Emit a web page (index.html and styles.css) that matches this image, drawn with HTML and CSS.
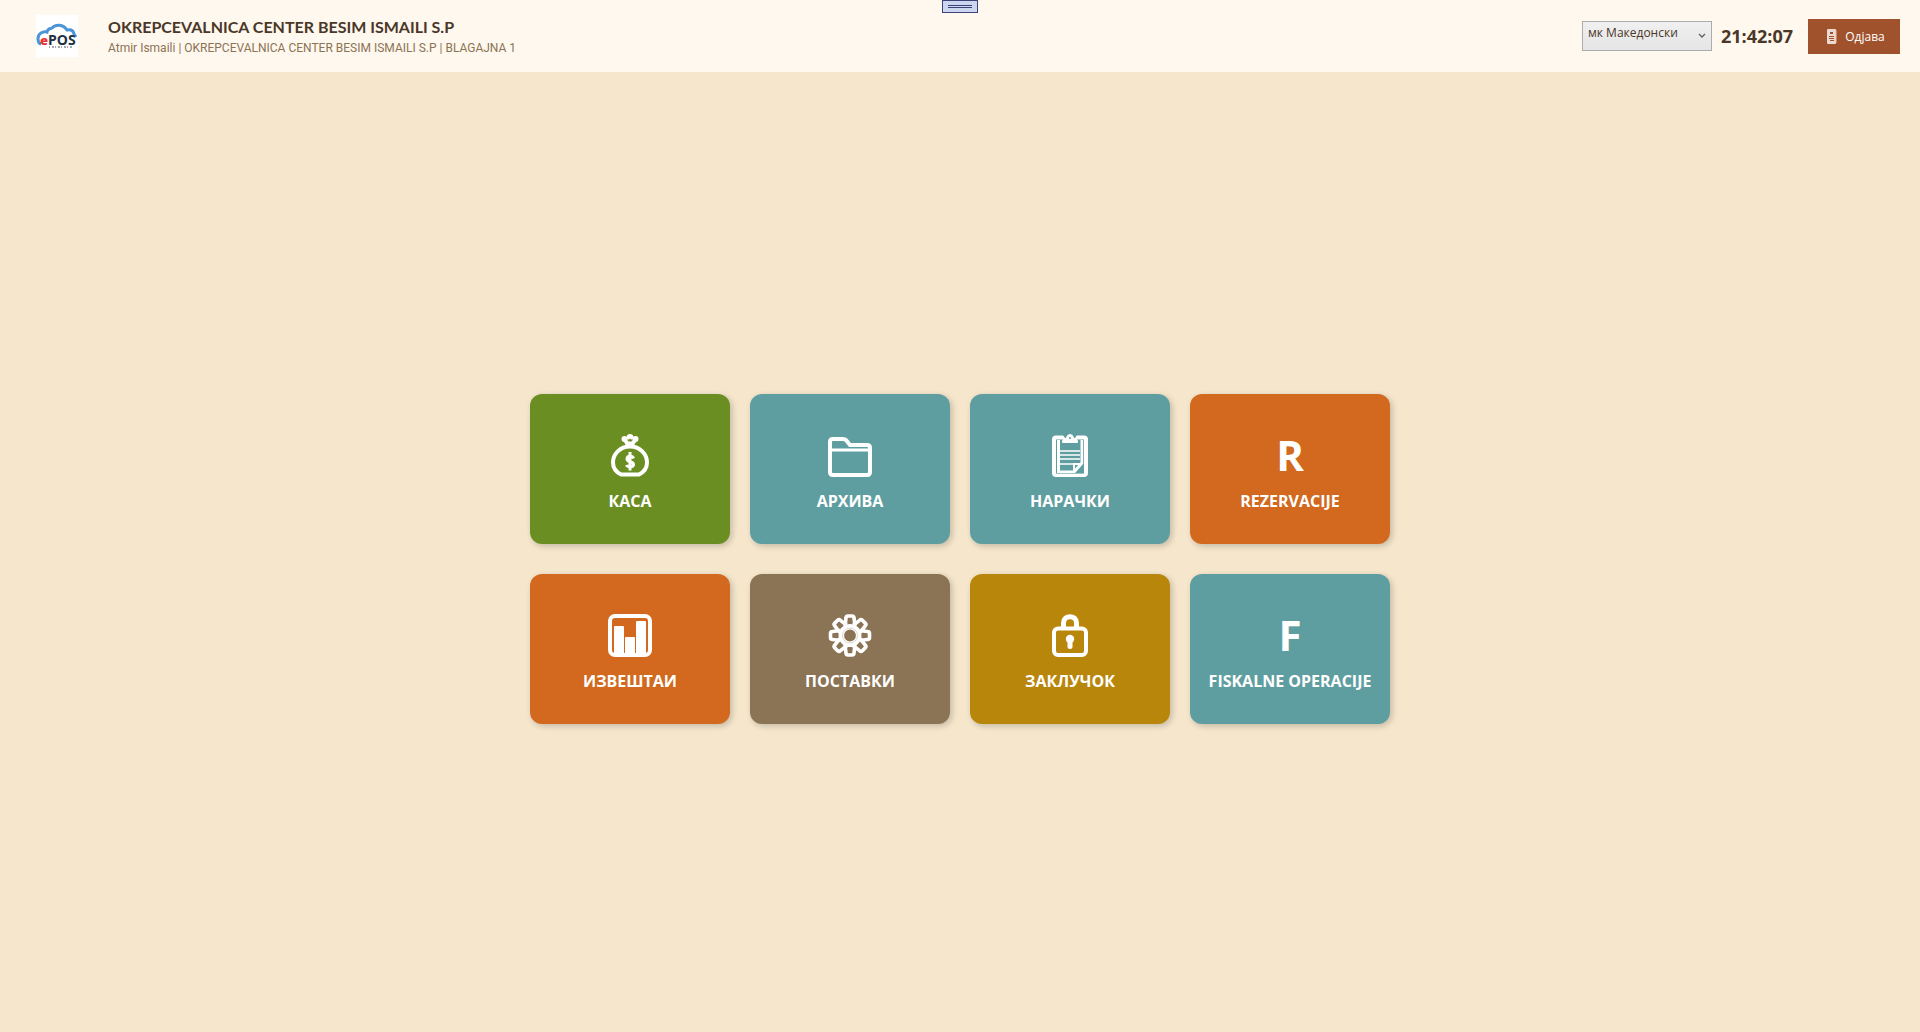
FILE: index.html
```html
<!DOCTYPE html>
<html lang="mk">
<head>
    <meta charset="UTF-8">
    <meta name="viewport" content="width=device-width, initial-scale=1.0">
    <title>ePOS</title>
    <link rel="stylesheet" href="styles.css">
</head>
<body>
    <header class="topbar">
        <svg class="logo" viewBox="0 0 42 42" role="img" aria-label="ePOS">
            <rect width="42" height="42" fill="#fff"/>
            <path d="M5 29 C1 28 1 20 5 18 Q8 16 11 17 C12 13 15 14 16 13 C20 9 27 9 31 15 Q37 14 38 19 L40 22" fill="none" stroke="#4a94d8" stroke-width="3"/>
            <text x="4" y="30" class="logo-e">e</text>
            <text x="12" y="30" class="logo-pos">POS</text>
            <path d="M13 32 H36" stroke="#4a5560" stroke-width="1" stroke-dasharray="1 2 2 1"/>
        </svg>
        <div class="company">
            <h1>OKREPCEVALNICA CENTER BESIM ISMAILI S.P</h1>
            <p>Atmir Ismaili | OKREPCEVALNICA CENTER BESIM ISMAILI S.P | BLAGAJNA 1</p>
        </div>
        <div class="language">
            <select aria-label="Јазик">
                <option>мк Македонски</option>
            </select>
            <svg class="arrow" viewBox="0 0 8 6"><path d="M1 1 L4 4 L7 1" fill="none" stroke="#606060" stroke-width="1.3"/></svg>
        </div>
        <time class="clock">21:42:07</time>
        <button type="button" class="logout">
            <svg viewBox="0 0 10 15">
                <rect x="0" y="0" width="9" height="15" rx="1" fill="#ecd9d2"/>
                <path d="M9 1 V14" stroke="#f3c796" stroke-width="1"/>
                <path d="M2 7.500 H7 M2 9.500 H7 M3 11.500 H7" stroke="#a0522d" stroke-width="1"/>
                <rect x="3" y="3" width="3" height="2" fill="#a0522d"/>
            </svg>
            Одјава
        </button>
        <div class="handle"></div>
    </header>

    <main class="menu">
        <button type="button" class="tile green">
            <svg class="icon" viewBox="0 0 44 44">
                <path d="M16 5 L20 12 H24 L28 5 Z" fill="#fff" stroke="#fff" stroke-width="3" stroke-linejoin="round"/>
                <circle cx="16.500" cy="5" r="3" fill="#fff"/>
                <circle cx="22" cy="3.500" r="3.500" fill="#fff"/>
                <circle cx="27.500" cy="5" r="3" fill="#fff"/>
                <path d="M22 4.500 L23 5.500 H25 L23.500 7.500 H20.500 L19 5.500 H21 Z" fill="#6b8e23"/>
                <path d="M22 12.500 C12 12.500 5 20 5 28.500 C5 34 8 38 13 40.500 H31 C36 38 39 34 39 28.500 C39 20 32 12.500 22 12.500 Z" fill="none" stroke="#fff" stroke-width="4"/>
                <path d="M25.500 24.500 C24.500 21.500 19 21.500 19 25 C19 28.500 25.500 27 25.500 30.500 C25.500 33.500 19.500 33.500 18.500 31 M22 18 V36.500" fill="none" stroke="#fff" stroke-width="3"/>
            </svg>
            <span>КАСА</span>
        </button>
        <button type="button" class="tile teal">
            <svg class="icon" viewBox="0 0 44 44">
                <path d="M2 38 V8 Q2 5 5 5 H15 Q17 5 18 6 L22 11 H39 Q42 11 42 14 V38 Q42 41 39 41 H5 Q2 41 2 38 Z" fill="none" stroke="#fff" stroke-width="4"/>
                <path d="M3 16 H41" stroke="#fff" stroke-width="3"/>
            </svg>
            <span>АРХИВА</span>
        </button>
        <button type="button" class="tile teal">
            <svg class="icon" viewBox="0 0 44 44">
                <rect x="6" y="3.500" width="32" height="37.500" rx="2" fill="none" stroke="#fff" stroke-width="4"/>
                <path d="M10.500 6 V38 H26 L34 29 V6" fill="none" stroke="#fff" stroke-width="3"/>
                <path d="M8.500 6 V39.500 H35.500 V6" fill="none" stroke="#5f9ea0" stroke-width="0.600"/>
                <path d="M15 1 L17 4 H27 L29 1 Z" fill="#5f9ea0"/>
                <path d="M14.500 8.500 V7 Q15 4.500 18.500 4 Q19 0.500 22 0.500 Q25 0.500 25.500 4 Q29 4.500 29.500 7 V8.500 Z" fill="#fff" stroke="#fff" stroke-width="1"/>
                <circle cx="22" cy="4" r="1" fill="#5f9ea0"/>
                <path d="M12 17 H32 M12 21 H32 M12 25 H32 M12 30 H34" stroke="#fff" stroke-width="1.600"/>
                <path d="M26 38 V30 H33" fill="none" stroke="#fff" stroke-width="2"/>
            </svg>
            <span>НАРАЧКИ</span>
        </button>
        <button type="button" class="tile orange">
            <span class="letter">R</span>
            <span>REZERVACIJE</span>
        </button>
        <button type="button" class="tile orange">
            <svg class="icon" viewBox="0 0 44 44">
                <rect x="2" y="2" width="40" height="39" rx="5" fill="none" stroke="#fff" stroke-width="4"/>
                <rect x="6" y="12" width="10" height="29" rx="1" fill="#fff"/>
                <rect x="17" y="23" width="10" height="18" rx="1" fill="#fff"/>
                <rect x="28" y="7" width="10" height="34" rx="1" fill="#fff"/>
            </svg>
            <span>ИЗВЕШТАИ</span>
        </button>
        <button type="button" class="tile brown">
            <svg class="icon" viewBox="0 0 44 44">
                <g fill="none" stroke="#fff" stroke-width="3.600" stroke-linejoin="round">
                    <path id="tooth" d="M17 12 L18 4 Q18 2 20 2 H24 Q26 2 26 4 L27 12"/>
                    <use href="#tooth" transform="rotate(45 22 21.500)"/>
                    <use href="#tooth" transform="rotate(90 22 21.500)"/>
                    <use href="#tooth" transform="rotate(135 22 21.500)"/>
                    <use href="#tooth" transform="rotate(180 22 21.500)"/>
                    <use href="#tooth" transform="rotate(225 22 21.500)"/>
                    <use href="#tooth" transform="rotate(270 22 21.500)"/>
                    <use href="#tooth" transform="rotate(315 22 21.500)"/>
                </g>
                <circle cx="22" cy="21.500" r="8.700" fill="none" stroke="#fff" stroke-width="5.600"/>
                <circle cx="22" cy="21.500" r="7.500" fill="none" stroke="#8b7355" stroke-width="0.300"/>
            </svg>
            <span>ПОСТАВКИ</span>
        </button>
        <button type="button" class="tile gold">
            <svg class="icon" viewBox="0 0 44 44">
                <path d="M15.500 14 V9 C15.500 0.500 28.500 0.500 28.500 9 V14" fill="none" stroke="#fff" stroke-width="5"/>
                <rect x="6" y="14.500" width="32" height="26.500" rx="4" fill="none" stroke="#fff" stroke-width="4"/>
                <circle cx="22" cy="25" r="4.200" fill="#fff"/>
                <path d="M22 25 V32.500" stroke="#fff" stroke-width="5" stroke-linecap="round"/>
            </svg>
            <span>ЗАКЛУЧОК</span>
        </button>
        <button type="button" class="tile teal">
            <span class="letter">F</span>
            <span>FISKALNE OPERACIJE</span>
        </button>
    </main>
</body>
</html>
```

FILE: styles.css
```css
body {
    font-family: 'Open Sans', 'Noto Sans', sans-serif;
    background: #f5e6cc;
    color: #4a3728;
    margin: 0;
    min-height: 100vh;
    display: flex;
    flex-direction: column;
}

button, select {
    font-family: inherit;
    cursor: pointer;
}

.topbar {
    position: relative;
    display: flex;
    align-items: center;
    background: #fff8ee;
    height: 72px;
    padding: 0 20px 0 36px;
}

.logo {
    width: 42px;
    height: 42px;
    margin-right: 30px;
}

.logo-e {
    font-size: 13px;
    font-weight: 800;
    fill: #f03030;
}

.logo-pos {
    font-size: 14px;
    font-weight: 700;
    fill: #22303f;
}

.company {
    flex: 1;
    padding-top: 2px;
}

.company h1 {
    margin: 0;
    font-family: Lato, 'Open Sans', sans-serif;
    font-size: 16px;
    line-height: 22px;
    font-weight: 700;
}

.company p {
    margin: 0;
    font-family: Roboto, 'Open Sans', sans-serif;
    font-size: 12px;
    line-height: 20px;
    color: #8b7355;
}

.language {
    position: relative;
    margin-right: 9px;
}

.language select {
    appearance: none;
    display: block;
    width: 130px;
    height: 30px;
    padding: 0 20px 7px 5px;
    border: 1px solid #acacac;
    border-radius: 0;
    background: linear-gradient(#f0f0f0, #e5e5e5);
    color: #4a3728;
    font-size: 12px;
}

.arrow {
    position: absolute;
    right: 6px;
    top: 12px;
    width: 8px;
    height: 6px;
    pointer-events: none;
}

.clock {
    font-size: 18px;
    font-weight: 700;
    margin-right: 15px;
}

.logout {
    display: flex;
    align-items: center;
    justify-content: center;
    gap: 8px;
    width: 92px;
    height: 35px;
    padding: 0 0 0 4px;
    border: none;
    background: #a0522d;
    color: #fff;
    font-size: 12px;
}

.logout svg {
    width: 10px;
    height: 15px;
}

/* small pull tab over the top edge */
.handle {
    position: absolute;
    top: 0;
    left: 50%;
    transform: translateX(-50%);
    box-sizing: border-box;
    width: 36px;
    height: 13px;
    border: 1px solid #3b4475;
    background: #cdd6f0;
}

.handle::before {
    content: '';
    display: block;
    height: 1px;
    margin: 4px 5px;
    border-top: 1px solid #3b4475;
    border-bottom: 1px solid #3b4475;
}

.menu {
    flex: 1;
    display: grid;
    grid-template-columns: repeat(4, 200px);
    gap: 30px 20px;
    justify-content: center;
    align-content: center;
    padding-top: 14px;
}

.tile {
    display: flex;
    flex-direction: column;
    align-items: center;
    height: 150px;
    padding: 40px 0 0;
    border: none;
    border-radius: 12px;
    color: #fff;
    font-size: 16px;
    line-height: 22px;
    font-weight: 700;
    box-shadow: 2px 2px 6px rgba(0, 0, 0, 0.2);
}

.icon, .letter {
    height: 44px;
    margin-bottom: 12px;
}

.icon {
    width: 44px;
}

.letter {
    font-size: 42px;
    line-height: 42px;
}

.green {
    background: #6b8e23;
}

.teal {
    background: #5f9ea0;
}

.orange {
    background: #d2691e;
}

.brown {
    background: #8b7355;
}

.gold {
    background: #b8860b;
}
```
